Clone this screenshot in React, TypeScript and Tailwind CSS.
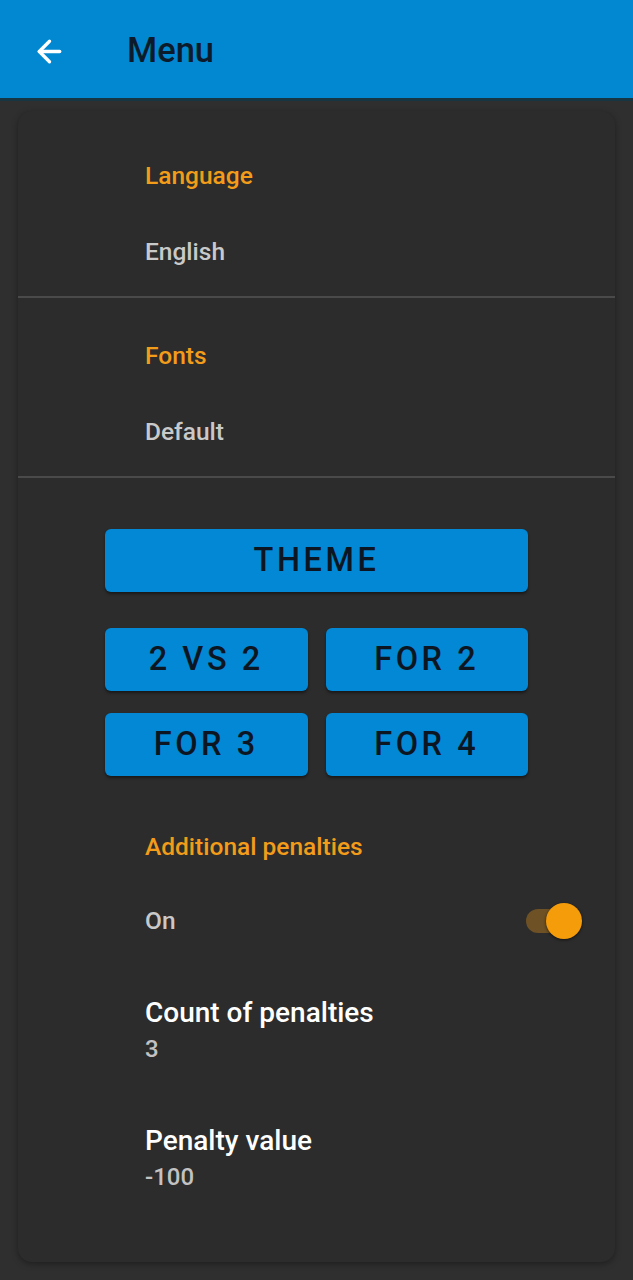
import { ArrowLeft } from 'lucide-react'

function SettingItem({ label, value }: { label: string; value: string }) {
  return (
    <div className="pl-[127px]">
      <p className="text-[24.5px] leading-[28px] font-medium text-[#f39c1a]">{label}</p>
      <p className="mt-[48px] text-[24.5px] leading-[28px] font-medium text-[#c9c9c9]">{value}</p>
    </div>
  )
}

function ModeButton({ children, className = '' }: { children: React.ReactNode; className?: string }) {
  return (
    <button
      className={`h-[63px] rounded-[6px] bg-[#0288d4] text-[32.5px] font-medium tracking-[0.11em] text-[#0b1622] shadow-[0_2px_3px_rgba(0,0,0,0.45)] ${className}`}
    >
      {children}
    </button>
  )
}

export default function App() {
  return (
    <div className="min-h-[1280px] bg-[#2f2f2f] font-['Roboto',sans-serif]">
      <header className="flex h-[101px] items-center bg-[#0288d1] pt-[4px] border-b-[3px] border-[#173644]">
        <ArrowLeft className="ml-[32px] h-[35px] w-[35px] text-white" strokeWidth={2.3} />
        <h1 className="ml-[60px] text-[34.5px] font-medium text-[#0c1b2b]">Menu</h1>
      </header>

      <div className="mx-[18px] mt-[10px] rounded-[14px] bg-[#2c2c2c] pt-[51px] pb-[72px] shadow-[0_2px_6px_rgba(0,0,0,0.35)]">
        <SettingItem label="Language" value="English" />
        <div className="mt-[30px] h-[2px] bg-[#4a4a4a]" />

        <div className="pt-[44px]">
          <SettingItem label="Fonts" value="Default" />
        </div>
        <div className="mt-[30px] h-[2px] bg-[#4a4a4a]" />

        <div className="mt-[51px] pl-[87px] pr-[87px]">
          <ModeButton className="w-full">THEME</ModeButton>
          <div className="mt-[36px] grid grid-cols-2 gap-x-[18px] gap-y-[22px]">
            <ModeButton>2 VS 2</ModeButton>
            <ModeButton>FOR 2</ModeButton>
            <ModeButton>FOR 3</ModeButton>
            <ModeButton>FOR 4</ModeButton>
          </div>
        </div>

        <div className="mt-[57px] pl-[127px]">
          <p className="text-[24.5px] leading-[28px] font-medium text-[#f39c1a]">Additional penalties</p>
          <div className="mt-[42px] flex items-center justify-between pr-[33px]">
            <p className="text-[24.5px] leading-[28px] font-medium text-[#c9c9c9]">On</p>
            <div className="relative h-[36px] w-[56px]">
              <div className="absolute left-0 top-[6px] h-[24px] w-[46px] rounded-full bg-[#6e5124]" />
              <div className="absolute right-0 top-0 h-[36px] w-[36px] rounded-full bg-[#f59c0b] shadow-[0_1px_3px_rgba(0,0,0,0.6)]" />
            </div>
          </div>
        </div>

        <div className="mt-[59px] pl-[127px]">
          <p className="text-[28px] leading-[30px] font-medium text-white">Count of penalties</p>
          <p className="mt-[8px] text-[24px] leading-[26px] font-medium text-[#c2c2c2]">3</p>
        </div>

        <div className="mt-[64px] pl-[127px]">
          <p className="text-[28px] leading-[30px] font-medium text-white">Penalty value</p>
          <p className="mt-[8px] text-[24px] leading-[26px] font-medium text-[#c2c2c2]">-100</p>
        </div>
      </div>
    </div>
  )
}
